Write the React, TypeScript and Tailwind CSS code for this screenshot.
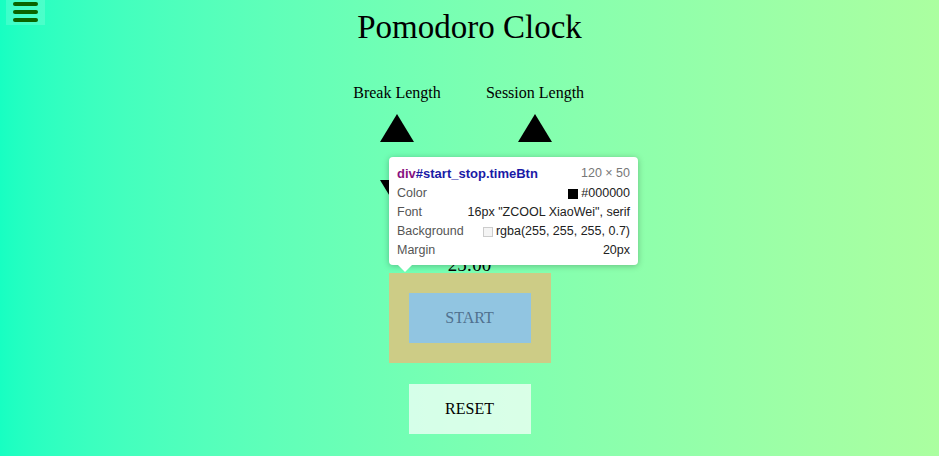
import React from 'react';

const Arrow: React.FC<{ up?: boolean }> = ({ up }) => (
  <div
    className={
      up
        ? 'w-0 h-0 border-l-[17px] border-r-[17px] border-b-[28px] border-l-transparent border-r-transparent border-b-black'
        : 'w-0 h-0 border-l-[17px] border-r-[17px] border-t-[28px] border-l-transparent border-r-transparent border-t-black'
    }
  />
);

const Row: React.FC<{ label: string; children: React.ReactNode }> = ({ label, children }) => (
  <div className="flex items-center justify-between h-[19px]">
    <span className="text-[#555]">{label}</span>
    <span className="flex items-center gap-[3px] text-[#222]">{children}</span>
  </div>
);

const App: React.FC = () => {
  return (
    <div
      className="relative h-[456px] w-full overflow-hidden bg-gradient-to-r from-[#17ffc2] to-[#abffa0] flex flex-col items-center"
      style={{ fontFamily: '"Liberation Serif", serif' }}
    >
      {/* menu button */}
      <div className="absolute left-[6px] top-0 w-[39px] h-[25px] bg-white/15 flex flex-col items-center pt-[2px] gap-[4px]">
        <span className="block w-[25px] h-[4px] rounded-full bg-[#0a6400]" />
        <span className="block w-[25px] h-[4px] rounded-full bg-[#0a6400]" />
        <span className="block w-[25px] h-[4px] rounded-full bg-[#0a6400]" />
      </div>

      <h1 className="mt-[7px] text-[33px] leading-[40px] text-black">Pomodoro Clock</h1>

      <div className="mt-[36px] flex pr-[7px]">
        <div className="w-[138px] flex flex-col items-center">
          <div className="text-[16px] leading-[20px]">Break Length</div>
          <div className="mt-[11px]"><Arrow up /></div>
          <div className="h-[38px]" />
          <Arrow />
        </div>
        <div className="w-[138px] flex flex-col items-center">
          <div className="text-[16px] leading-[20px]">Session Length</div>
          <div className="mt-[11px]"><Arrow up /></div>
          <div className="h-[38px]" />
          <Arrow />
        </div>
      </div>

      <div className="h-[44px]" />
      <div className="mt-[4px] text-[19px] leading-[18px]">25:00</div>

      <div className="mt-[-1px] bg-[#cdcc86] p-[20px]">
        <div className="w-[122px] h-[50px] bg-[#91c5e1] flex items-center justify-center text-[16px] text-[#50718f]">
          START
        </div>
      </div>

      <div className="mt-[21px] w-[122px] h-[50px] bg-white/70 flex items-center justify-center text-[16px] text-black">
        RESET
      </div>

      {/* devtools inspector tooltip */}
      <div
        className="absolute left-[389px] top-[157px] w-[249px] h-[108px] bg-white rounded-[4px] shadow-[0_1px_6px_rgba(0,0,0,0.25)] px-[8px] pt-[6px] text-[12.5px]"
        style={{ fontFamily: '"Liberation Sans", Arial, sans-serif' }}
      >
        <div className="flex items-center justify-between h-[21px]">
          <span className="font-bold text-[13px]">
            <span className="text-[#881280]">div</span>
            <span className="text-[#1a1aa6]">#start_stop.timeBtn</span>
          </span>
          <span className="text-[#777]">120 × 50</span>
        </div>
        <Row label="Color">
          <span className="inline-block w-[10px] h-[10px] bg-black" />
          #000000
        </Row>
        <Row label="Font">16px "ZCOOL XiaoWei", serif</Row>
        <Row label="Background">
          <span className="inline-block w-[10px] h-[10px] border border-[#ccc] bg-[#f4f4f4]" />
          rgba(255, 255, 255, 0.7)
        </Row>
        <Row label="Margin">20px</Row>
        <div className="absolute left-[8px] bottom-[-7px] w-0 h-0 border-l-[8px] border-r-[8px] border-t-[8px] border-l-transparent border-r-transparent border-t-white" />
      </div>
    </div>
  );
};

export default App;
